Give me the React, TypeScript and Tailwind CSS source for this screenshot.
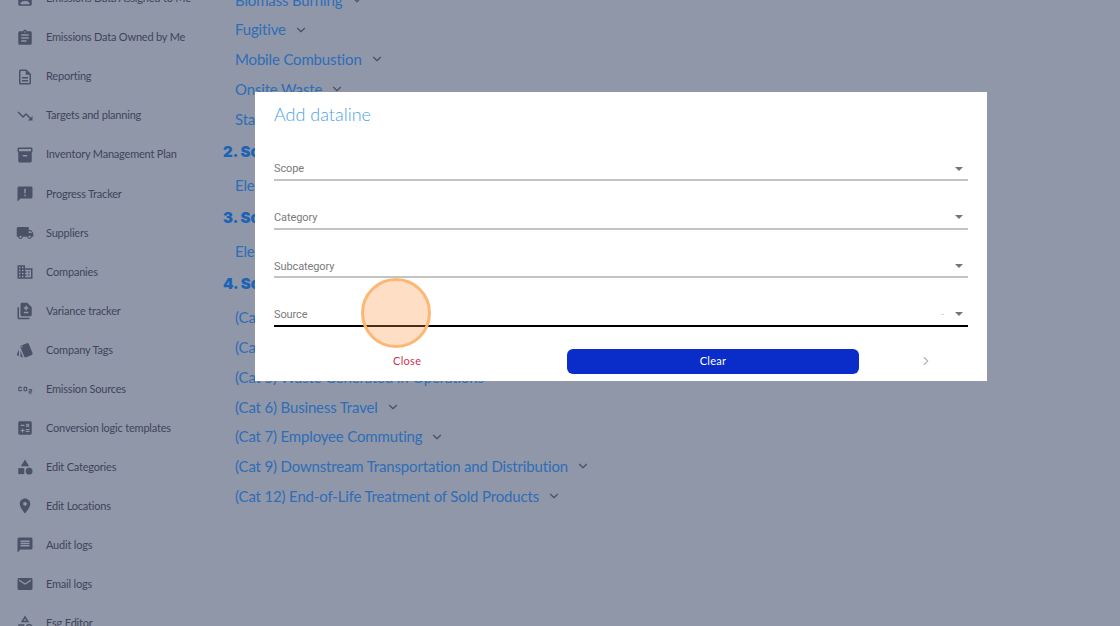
import React from 'react';
import { ChevronDown, ChevronRight } from 'lucide-react';
import {
  MdAssignment,
  MdAssignmentInd,
  MdOutlineDescription,
  MdTrendingDown,
  MdInventory2,
  MdAnnouncement,
  MdLocalShipping,
  MdDomain,
  MdDifference,
  MdStyle,
  MdCo2,
  MdCalculate,
  MdCategory,
  MdLocationOn,
  MdMessage,
  MdEmail,
  MdOutlineCategory,
} from 'react-icons/md';

const navItems = [
  { label: 'Emissions Data Assigned to Me', icon: MdAssignmentInd },
  { label: 'Emissions Data Owned by Me', icon: MdAssignment },
  { label: 'Reporting', icon: MdOutlineDescription },
  { label: 'Targets and planning', icon: MdTrendingDown },
  { label: 'Inventory Management Plan', icon: MdInventory2 },
  { label: 'Progress Tracker', icon: MdAnnouncement },
  { label: 'Suppliers', icon: MdLocalShipping },
  { label: 'Companies', icon: MdDomain },
  { label: 'Variance tracker', icon: MdDifference },
  { label: 'Company Tags', icon: MdStyle },
  { label: 'Emission Sources', icon: MdCo2 },
  { label: 'Conversion logic templates', icon: MdCalculate },
  { label: 'Edit Categories', icon: MdCategory },
  { label: 'Edit Locations', icon: MdLocationOn },
  { label: 'Audit logs', icon: MdMessage },
  { label: 'Email logs', icon: MdEmail },
  { label: 'Esg Editor', icon: MdOutlineCategory },
];

function ListRow({ label }: { label: string }) {
  return (
    <div className="h-[29.75px] pl-[12px] flex items-center text-[15px] tracking-[-0.16px] text-[#2f6db5]">
      <span>{label}</span>
      <ChevronDown className="w-[14px] h-[14px] ml-[8px] text-[#4a5064]" />
    </div>
  );
}

function Heading({ label }: { label: string }) {
  return (
    <div className="h-[36.5px] flex items-center text-[15px] font-black font-['Inter',sans-serif] text-[#1c63b4]">
      {label}
    </div>
  );
}

function SelectField({ label, active, value }: { label: string; active?: boolean; value?: string }) {
  return (
    <div
      className={`h-[21px] flex items-center justify-between border-b-2 text-[11px] tracking-[-0.1px] text-[#7b7b7b] font-['Roboto',sans-serif] ${
        active ? 'border-black' : 'border-[#c4c4c4]'
      }`}
    >
      <span>{label}</span>
      <span className="flex items-center gap-[11px] pr-[5px] mb-[2px]">
        {value && <span className="text-[#bbbbbb] text-[9px]">{value}</span>}
        <span className="w-0 h-0 border-x-[4.5px] border-x-transparent border-t-[4.5px] border-t-[#757575]" />
      </span>
    </div>
  );
}

export default function App() {
  return (
    <div className="relative h-[626px] w-[1120px] overflow-hidden bg-[#9097a9] font-['Lato',sans-serif]">
      <div className="flex -mt-[21px]">
        <nav className="w-[223px] shrink-0 flex flex-col">
          {navItems.map((item) => (
            <div key={item.label} className="h-[39.05px] flex items-center pl-[16px] text-[#3f4559]">
              <item.icon className="w-[18px] h-[18px] shrink-0 text-[#4b5268]" />
              <span className="ml-[12px] text-[11px] tracking-[-0.2px] whitespace-nowrap">{item.label}</span>
            </div>
          ))}
        </nav>
        <main className="flex-1 mt-[6px]">
          <ListRow label="Biomass Burning" />
          <ListRow label="Fugitive" />
          <ListRow label="Mobile Combustion" />
          <ListRow label="Onsite Waste" />
          <ListRow label="Stationary Combustion" />
          <Heading label="2. Scope 2" />
          <ListRow label="Electricity" />
          <Heading label="3. Scope 2" />
          <ListRow label="Electricity" />
          <Heading label="4. Scope 3" />
          <ListRow label="(Cat 1) Purchased Goods and Services" />
          <ListRow label="(Cat 3) Fuel and Energy Related Activities" />
          <ListRow label="(Cat 5) Waste Generated in Operations" />
          <ListRow label="(Cat 6) Business Travel" />
          <ListRow label="(Cat 7) Employee Commuting" />
          <ListRow label="(Cat 9) Downstream Transportation and Distribution" />
          <ListRow label="(Cat 12) End-of-Life Treatment of Sold Products" />
        </main>
      </div>

      <div className="absolute left-[255px] top-[92px] w-[732px] h-[289px] bg-white px-[19px]">
        <h2 className="mt-[10px] text-[18px] leading-[24px] font-light text-[#4ea2e4]">Add dataline</h2>
        <div className="mt-[34px] flex flex-col gap-[27.67px]">
          <SelectField label="Scope" />
          <SelectField label="Category" />
          <SelectField label="Subcategory" />
          <SelectField label="Source" active value="-" />
        </div>
        <div className="mt-[22px] flex items-center">
          <button className="ml-[119px] w-[28px] text-[11px] tracking-[0.3px] text-[#d1314d]">Close</button>
          <button className="ml-[146px] w-[292px] h-[25px] rounded-[6px] bg-[#0a2cc8] text-[11px] tracking-[0.3px] text-white">
            Clear
          </button>
          <ChevronRight className="ml-[60px] w-[14px] h-[14px] text-[#b4b4b4]" />
        </div>
      </div>

      <div className="absolute left-[361px] top-[278px] w-[70px] h-[70px] rounded-full border-[3px] border-[#fbb773] bg-[#fb923c]/30" />
    </div>
  );
}
